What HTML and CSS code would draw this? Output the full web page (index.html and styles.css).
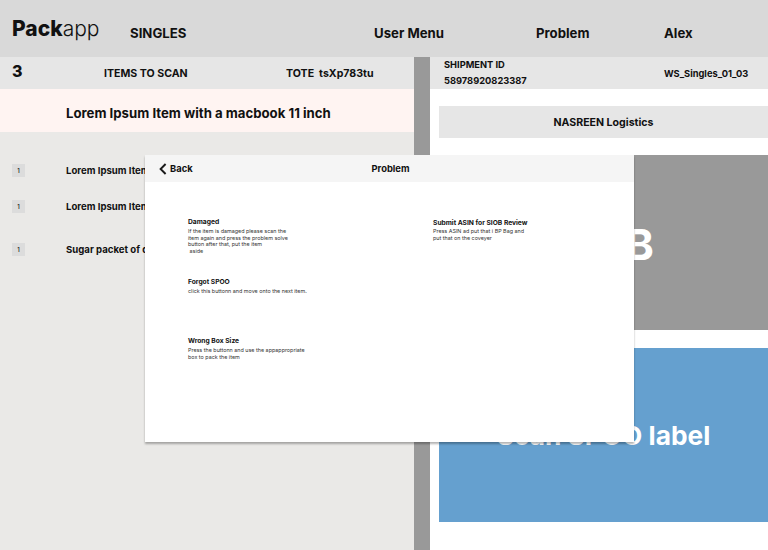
FILE: index.html
```html
<!DOCTYPE html>
<html lang="en">
<head>
<meta charset="utf-8">
<title>Packapp</title>
<link rel="stylesheet" href="styles.css">
</head>
<body>
<div class="app">
  <header class="topbar">
    <div class="logo"><b>Pack</b>app</div>
    <div class="nav-singles">SINGLES</div>
    <div class="nav-user">User Menu</div>
    <div class="nav-problem">Problem</div>
    <div class="nav-alex">Alex</div>
  </header>
  <div class="columns">
    <section class="left">
      <div class="strip">
        <span class="count">3</span>
        <span class="to-scan">ITEMS TO SCAN</span>
        <span class="tote">TOTE&nbsp; tsXp783tu</span>
      </div>
      <div class="current">Lorem Ipsum Item with a macbook 11 inch</div>
      <ul class="items">
        <li class="item"><span class="qty">1</span><span class="name">Lorem Ipsum Item</span></li>
        <li class="item"><span class="qty">1</span><span class="name">Lorem Ipsum Item</span></li>
        <li class="item item-last"><span class="qty">1</span><span class="name">Sugar packet of d</span></li>
      </ul>
    </section>
    <div class="divider"></div>
    <section class="right">
      <div class="shipment">
        <div class="ship-id">
          <div>SHIPMENT ID</div>
          <div>58978920823387</div>
        </div>
        <div class="station">WS_Singles_01_03</div>
      </div>
      <div class="panels">
        <div class="carrier">NASREEN Logistics</div>
        <div class="scan scan-gray">SIOB</div>
        <div class="scan scan-blue">Scan SPOO label</div>
      </div>
    </section>
  </div>
</div>
<div class="modal">
  <div class="modal-head">
    <div class="back">
      <svg class="chev" width="8" height="12" viewBox="0 0 8 12" aria-hidden="true"><path d="M6.6 1 1.6 6l5 5" fill="none" stroke="#1a1a1a" stroke-width="1.9"/></svg>
      <span>Back</span>
    </div>
    <div class="modal-title">Problem</div>
  </div>
  <div class="modal-body">
    <div class="col-a">
      <div class="opt opt-damaged">
        <h3>Damaged</h3>
        <p>If the item is damaged please scan the<br>item again and press the problem solve<br>button after that, put the item<br>&nbsp;aside</p>
      </div>
      <div class="opt opt-forgot">
        <h3>Forgot SPOO</h3>
        <p>click this buttonn and move onto the next item.</p>
      </div>
      <div class="opt">
        <h3>Wrong Box Size</h3>
        <p>Press the buttonn and use the appappropriate<br>box to pack the item</p>
      </div>
    </div>
    <div class="col-b">
      <div class="opt opt-asin">
        <h3>Submit ASIN for SIOB Review</h3>
        <p>Press ASIN ad put that i BP Bag and<br>put that on the coveyer</p>
      </div>
    </div>
  </div>
</div>
</body>
</html>
```
FILE: styles.css
```css
* { box-sizing: border-box; }
html, body { margin: 0; padding: 0; }
body {
  width: 768px;
  height: 550px;
  overflow: hidden;
  position: relative;
  font-family: Inter, "Liberation Sans", sans-serif;
  color: #111;
  background: #fff;
}
.app { display: flex; flex-direction: column; height: 550px; }

.topbar {
  height: 57px;
  background: #d9d9d9;
  display: flex;
  align-items: flex-start;
  font-weight: 700;
  font-size: 13.2px;
  line-height: 17px;
  padding: 25px 0 0 12px;
  flex: none;
}
.logo {
  font-size: 21px;
  line-height: 26px;
  font-weight: 300;
  margin-top: -9px;
  width: 118px;
}
.logo b { font-weight: 800; }
.nav-singles { width: 244px; }
.nav-user { width: 162px; }
.nav-problem { width: 128px; }

.columns { display: flex; flex: 1; min-height: 0; }
.left { width: 414px; background: #eae9e7; flex: none; }
.divider { width: 16px; background: #999; flex: none; }
.right { flex: 1; min-width: 0; }

.strip {
  height: 32px;
  background: #e6e6e6;
  display: flex;
  align-items: center;
  font-size: 10.6px;
  font-weight: 700;
  padding-left: 12px;
}
.count { font-size: 16px; font-weight: 800; width: 92px; margin-top: -5px; }
.to-scan { width: 182px; }
.current {
  height: 43px;
  background: #fff4f2;
  padding: 5px 0 0 66px;
  display: flex;
  align-items: center;
  font-size: 13.2px;
  font-weight: 700;
}
.items { list-style: none; margin: 0; padding: 32px 0 0 12px; }
.item {
  display: flex;
  align-items: center;
  height: 13px;
  margin-bottom: 23px;
  font-size: 9.6px;
  font-weight: 700;
  white-space: nowrap;
}
.item-last { margin-top: 30px; }
.name { margin-top: -1px; }
.qty {
  width: 13px;
  height: 13px;
  background: #dcdcdc;
  font-size: 6px;
  font-weight: 500;
  display: flex;
  align-items: center;
  justify-content: center;
  margin-right: 41px;
}

.shipment {
  height: 32px;
  background: #e6e6e6;
  display: flex;
  align-items: center;
  padding-left: 14px;
  font-size: 9.3px;
  font-weight: 700;
}
.ship-id { width: 220px; line-height: 16px; margin-top: -1px; }
.panels { padding: 17px 0 0 9px; }
.carrier {
  height: 32px;
  background: #e6e6e6;
  display: flex;
  align-items: center;
  justify-content: center;
  font-size: 10.6px;
  font-weight: 700;
  margin-bottom: 17px;
}
.scan {
  display: flex;
  align-items: center;
  justify-content: center;
  color: #fff;
  font-weight: 700;
}
.scan-gray { height: 175px; background: #999; font-size: 42.5px; margin-bottom: 18px; padding-top: 4px; }
.scan-blue { height: 174px; background: #65a0cf; font-size: 26.3px; }

.modal {
  position: absolute;
  left: 145px;
  top: 155px;
  width: 489px;
  height: 287px;
  background: #fff;
  box-shadow: 0 2px 2px rgba(0,0,0,.3);
}
.modal-head {
  height: 27px;
  background: #f5f5f5;
  position: relative;
  display: flex;
  align-items: center;
  justify-content: center;
  font-size: 9.4px;
  font-weight: 700;
  padding-left: 2px;
}
.back {
  position: absolute;
  left: 14px;
  top: 0;
  height: 27px;
  display: flex;
  align-items: center;
  gap: 3px;
}
.modal-body { display: flex; padding: 36px 0 0 43px; }
.col-a { width: 245px; }
.opt h3 { margin: 0; font-size: 6.7px; line-height: 9px; font-weight: 700; }
.opt p { margin: 0; font-size: 5.4px; line-height: 6.6px; color: #333; padding-top: 1px; }
.opt-damaged { height: 60px; }
.opt-forgot { height: 59px; }
.opt-asin { padding-top: 1px; }
.opt-asin p { padding-top: 0; }
```
